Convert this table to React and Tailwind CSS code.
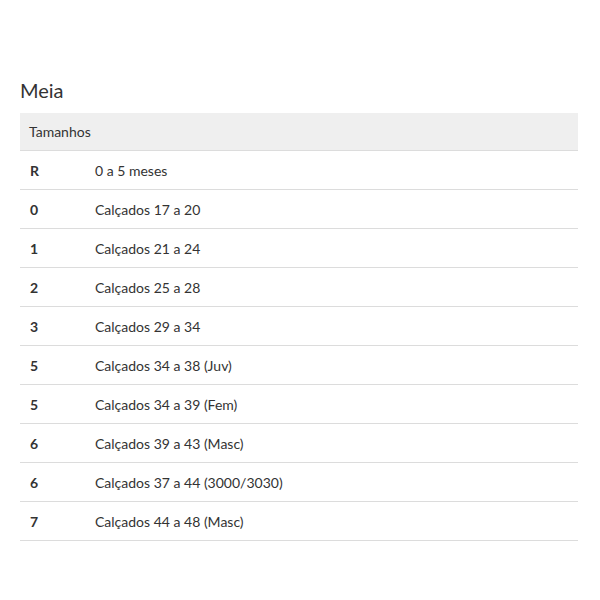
export default function App() {
  const rows = [
    ['R', '0 a 5 meses'],
    ['0', 'Calçados 17 a 20'],
    ['1', 'Calçados 21 a 24'],
    ['2', 'Calçados 25 a 28'],
    ['3', 'Calçados 29 a 34'],
    ['5', 'Calçados 34 a 38 (Juv)'],
    ['5', 'Calçados 34 a 39 (Fem)'],
    ['6', 'Calçados 39 a 43 (Masc)'],
    ['6', 'Calçados 37 a 44 (3000/3030)'],
    ['7', 'Calçados 44 a 48 (Masc)'],
  ];

  return (
    <div className="w-[600px] h-[600px] bg-white pt-[77px] pl-[20px] pr-[22px] text-[#333]" style={{ fontFamily: 'Lato, "Open Sans", sans-serif' }}>
      <h2 className="text-[20px] leading-[26px] mb-[10px] text-[#333]">Meia</h2>
      <div className="bg-[#efefef] h-[38px] flex items-center px-[9px] text-[14px] border-b border-[#dcdcdc]">
        Tamanhos
      </div>
      {rows.map(([size, desc], i) => (
        <div key={i} className="flex items-center h-[39px] border-b border-[#dcdcdc] text-[14px]">
          <span className="w-[75px] pl-[10px] font-bold">{size}</span>
          <span>{desc}</span>
        </div>
      ))}
    </div>
  );
}
